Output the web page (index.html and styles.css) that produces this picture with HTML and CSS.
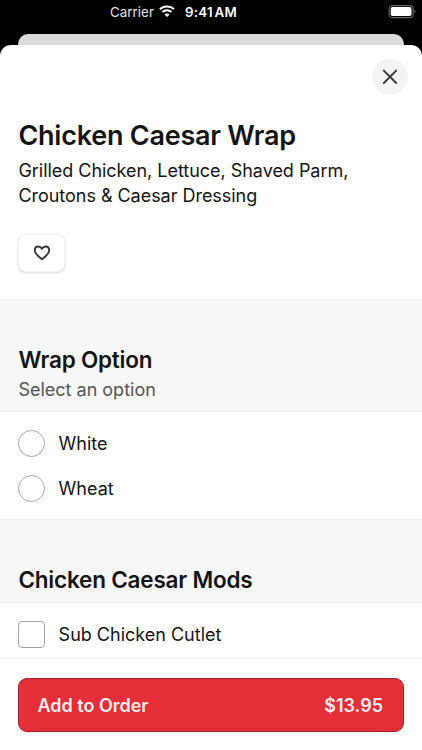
FILE: index.html
```
<!DOCTYPE html>
<html lang="en">
<head>
<meta charset="utf-8">
<title>Chicken Caesar Wrap</title>
<link rel="stylesheet" href="styles.css">
</head>
<body>
<div class="screen">
  <header class="status">
    <span class="carrier">Carrier</span>
    <svg class="wifi" width="16" height="12" viewBox="0 0 16 12" fill="none" stroke="#fff">
      <path d="M.9 4.2C4.8.5 11.2.5 15.1 4.2" stroke-width="2.1"/>
      <path d="M3.4 7C6 4.5 10 4.5 12.6 7" stroke-width="2"/>
      <path d="M8 12 5.5 9.5C6.9 8.1 9.1 8.1 10.5 9.5Z" fill="#fff" stroke="none"/>
    </svg>
    <span class="time">9:41<span class="ampm">AM</span></span>
    <svg class="battery" width="28" height="14" viewBox="0 0 28 14">
      <rect x="1.1" y=".6" width="24" height="12" rx="3.2" fill="none" stroke="#666" stroke-width="1.1"/>
      <rect x="2.7" y="2.1" width="20.8" height="9" rx="1.8" fill="#fff"/>
      <path d="M26.300 4.600c1.600.7 1.600 3.300 0 4Z" fill="#666"/>
    </svg>
  </header>
  <div class="backsheet"></div>
  <main class="sheet">
    <section class="intro">
      <button class="close" aria-label="Close">
        <svg width="16" height="16" viewBox="0 0 16 16" fill="none" stroke="#38383a" stroke-width="1.9" stroke-linecap="round"><path d="m1.8 1.6 12.400 12.400M14.200 1.600 1.800 14"/></svg>
      </button>
      <h1>Chicken Caesar Wrap</h1>
      <p class="desc">Grilled Chicken, Lettuce, Shaved Parm, Croutons &amp; Caesar Dressing</p>
      <button class="fav" aria-label="Favorite">
        <svg width="18" height="16" viewBox="0 0 18 16" fill="none" stroke="#38383a" stroke-width="2" stroke-linejoin="round"><path d="M9 14.2C6.3 12.2 1.8 8.9 1.8 5.2 1.8 3 3.2 1.5 5.2 1.5 6.9 1.5 8.2 2.3 9 3.700 9.800 2.300 11.100 1.500 12.800 1.500 14.800 1.500 16.200 3 16.200 5.200 16.200 8.900 11.700 12.200 9 14.200Z"/></svg>
      </button>
    </section>
    <section class="heading wrap-heading">
      <h2>Wrap Option</h2>
      <p>Select an option</p>
    </section>
    <section class="options wrap-options">
      <label class="option"><span class="radio"></span>White</label>
      <label class="option"><span class="radio"></span>Wheat</label>
    </section>
    <section class="heading mods-heading">
      <h2>Chicken Caesar Mods</h2>
    </section>
    <section class="options mods">
      <label class="option"><span class="check"></span>Sub Chicken Cutlet</label>
    </section>
    <footer class="footer">
      <button class="order"><span>Add to Order</span><span class="price">$13.95</span></button>
    </footer>
  </main>
</div>
</body>
</html>
```
FILE: styles.css
```
* { box-sizing: border-box; }
body { margin: 0; background: #000; color: #141414; font-family: Inter, "Liberation Sans", sans-serif; }
h1, h2, p { margin: 0; }
button { font: inherit; padding: 0; border: 0; }
svg { display: block; }
.screen { height: 750px; display: flex; flex-direction: column; overflow: hidden; }
.status { height: 34px; flex: none; display: flex; align-items: flex-start; padding: 5px 6px 0 110px; color: #fff; font-size: 13.3px; line-height: 14px; }
.carrier { width: 49px; color: #e4e4e4; letter-spacing: .05px; }
.time { margin-left: 10px; font-weight: 600; letter-spacing: .3px; }
.ampm { margin-left: 1.5px; }
.battery { margin-left: auto; }
.backsheet { height: 11px; flex: none; margin: 0 18px; background: #dadada; border-radius: 10px 10px 0 0; }
.sheet { flex: 1; min-height: 0; display: flex; flex-direction: column; background: #fff; border-radius: 11px 11px 0 0; }
.intro { height: 254px; flex: none; padding: 14px 14px 0 18.4px; display: flex; flex-direction: column; align-items: flex-start; }
.close { width: 36px; height: 36px; flex: none; align-self: flex-end; border-radius: 50%; background: #f4f4f4; display: grid; place-items: center; }
h1 { margin-top: 24px; font-size: 27px; line-height: 34px; font-weight: 600; letter-spacing: -.24px; white-space: nowrap; }
.desc { margin-top: 5px; font-size: 18px; line-height: 25px; letter-spacing: -.03px; width: 350px; }
.fav { width: 47px; height: 38px; flex: none; margin-top: 26px; border-radius: 8px; background: #fff; border: 1px solid #f2f2f2; box-shadow: 0 1px 3px rgba(0,0,0,.16); display: grid; place-items: center; }
.heading { flex: none; background: #f7f7f7; border-top: 1px solid #efefef; border-bottom: 1px solid #efefef; padding: 46px 18.4px 0; }
.wrap-heading { height: 113px; }
.mods-heading { height: 84px; }
h2 { font-size: 22.5px; line-height: 28px; font-weight: 600; letter-spacing: -.2px; white-space: nowrap; }
.heading p { margin-top: 3px; font-size: 18px; line-height: 25px; color: #555; }
.options { flex: none; padding: 18px 18px 0; display: flex; flex-direction: column; gap: 18px; }
.wrap-options { height: 107px; }
.mods { height: 55px; }
.option { display: flex; align-items: center; gap: 13.6px; height: 27px; font-size: 18px; line-height: 27px; }
.radio, .check { width: 27px; height: 27px; border: 1px solid #a5a5a5; background: #fff; }
.radio { border-radius: 50%; }
.check { border-radius: 4px; }
.footer { flex: 1; background: #fff; border-top: 1px solid #efefef; box-shadow: 0 -1px 2px rgba(0,0,0,.04); padding: 19px 18px 0; }
.order { width: 100%; height: 54px; display: flex; align-items: center; justify-content: space-between; padding: 0 20px 0 18.4px; border: 1px solid #a32029; border-radius: 9px; background: #e42f38; color: #fdeced; font-size: 18px; font-weight: 600; }
```
